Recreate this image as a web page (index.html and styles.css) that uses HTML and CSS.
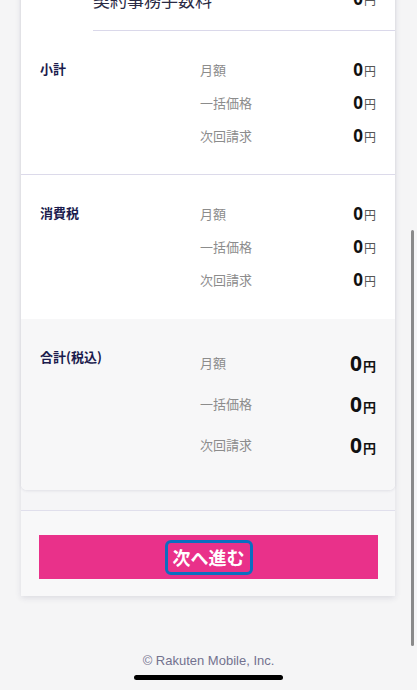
FILE: index.html
```html
<!DOCTYPE html>
<html lang="ja">
<head>
    <meta charset="UTF-8">
    <meta name="viewport" content="width=device-width, initial-scale=1.0">
    <title>お申し込み内容</title>
    <link rel="stylesheet" href="styles.css">
</head>
<body>

<div class="page">
    <div class="order">
        <div class="summary">
            <div class="fee-row">
                <span class="fee-name">契約事務手数料</span>
                <span class="price">0<span class="yen">円</span></span>
            </div>

            <section class="sum-block">
                <h3 class="sum-title">小計</h3>
                <ul class="sum-rows">
                    <li><span class="row-label">月額</span><span class="price">0<span class="yen">円</span></span></li>
                    <li><span class="row-label">一括価格</span><span class="price">0<span class="yen">円</span></span></li>
                    <li><span class="row-label">次回請求</span><span class="price">0<span class="yen">円</span></span></li>
                </ul>
            </section>

            <section class="sum-block tax">
                <h3 class="sum-title">消費税</h3>
                <ul class="sum-rows">
                    <li><span class="row-label">月額</span><span class="price">0<span class="yen">円</span></span></li>
                    <li><span class="row-label">一括価格</span><span class="price">0<span class="yen">円</span></span></li>
                    <li><span class="row-label">次回請求</span><span class="price">0<span class="yen">円</span></span></li>
                </ul>
            </section>

            <section class="sum-block total">
                <h3 class="sum-title">合計(税込)</h3>
                <ul class="sum-rows">
                    <li><span class="row-label">月額</span><span class="price">0<span class="yen">円</span></span></li>
                    <li><span class="row-label">一括価格</span><span class="price">0<span class="yen">円</span></span></li>
                    <li><span class="row-label">次回請求</span><span class="price">0<span class="yen">円</span></span></li>
                </ul>
            </section>
        </div>

        <div class="actions">
            <button type="button" class="next-btn"><span class="focus-ring">次へ進む</span></button>
        </div>
    </div>

    <footer class="copyright">© Rakuten Mobile, Inc.</footer>
</div>

<div class="scrollbar"></div>
<div class="home-bar"></div>

</body>
</html>
```

FILE: styles.css
```css
body {
    margin: 0;
    background-color: #f5f5f6;
    font-family: "Noto Sans CJK JP", "Noto Sans", sans-serif;
    color: #222;
}
.page {
    padding-top: 1px;
}
.order {
    margin: -30px 22px 0 21px;
    background-color: #f5f5f7;
    box-shadow: 0 2px 6px rgba(40, 40, 80, 0.12);
}
.summary {
    background-color: #fff;
    border-radius: 0 0 6px 6px;
    box-shadow: 0 1px 3px rgba(40, 40, 80, 0.10);
    overflow: hidden;
}
.fee-row {
    display: flex;
    justify-content: space-between;
    align-items: center;
    margin-left: 72px;
    padding: 16px 19px 18px 0;
    line-height: 24px;
    border-bottom: 1px solid #dad8ea;
}
.fee-name {
    font-size: 17px;
    color: #2a2a44;
}
.sum-block {
    display: grid;
    grid-template-columns: 160px 1fr;
    padding: 22px 19px 22px 19px;
    border-bottom: 1px solid #dcdaea;
}
.sum-block.tax {
    border-bottom: none;
    padding-bottom: 23px;
}
.sum-title {
    margin: 0;
    font-size: 13px;
    font-weight: 700;
    line-height: 31px;
    color: #1b1b4d;
}
.sum-rows {
    list-style: none;
    margin: 0;
    padding: 0;
}
.sum-rows li {
    display: flex;
    justify-content: space-between;
    align-items: center;
    height: 33px;
}
.row-label {
    font-size: 13px;
    color: #8c8c8c;
}
.price {
    font-family: "Noto Sans", "Noto Sans CJK JP", sans-serif;
    font-size: 17px;
    font-weight: 700;
    color: #111;
}
.yen {
    font-family: "Noto Sans CJK JP", sans-serif;
    font-size: 12px;
    font-weight: 400;
    color: #555;
    margin-left: 1px;
}
.sum-block.total {
    background-color: #f7f7f8;
    border-bottom: none;
    padding: 23px 19px 25px 19px;
}
.sum-block.total .sum-title {
    line-height: 30px;
}
.sum-block.total .sum-rows li {
    height: 41px;
}
.sum-block.total .price {
    font-size: 21px;
}
.sum-block.total .yen {
    font-size: 13px;
    font-weight: 700;
    color: #111;
}
.actions {
    margin-top: 20px;
    border-top: 1px solid #e0dfec;
    background-color: #f8f8f9;
    padding: 24px 17px 17px 18px;
}
.next-btn {
    display: flex;
    justify-content: center;
    align-items: center;
    width: 100%;
    height: 44px;
    padding: 0;
    border: none;
    background-color: #e9318a;
    font-family: "Noto Sans CJK JP", sans-serif;
    cursor: pointer;
}
.focus-ring {
    display: block;
    padding: 3px 5px;
    border: 3px solid #0b6ec0;
    border-radius: 6px;
    font-size: 18px;
    font-weight: 700;
    line-height: 23px;
    color: #fff;
}
.copyright {
    padding-top: 56px;
    text-align: center;
    font-family: "Liberation Sans", Arial, sans-serif;
    font-size: 13px;
    line-height: 18px;
    color: #73728f;
}
.scrollbar {
    position: fixed;
    top: 230px;
    right: 3px;
    width: 3px;
    height: 416px;
    border-radius: 2px;
    background-color: #8a8a8a;
}
.home-bar {
    position: fixed;
    left: 134px;
    bottom: 10px;
    width: 149px;
    height: 5px;
    border-radius: 3px;
    background-color: #000;
}
```
